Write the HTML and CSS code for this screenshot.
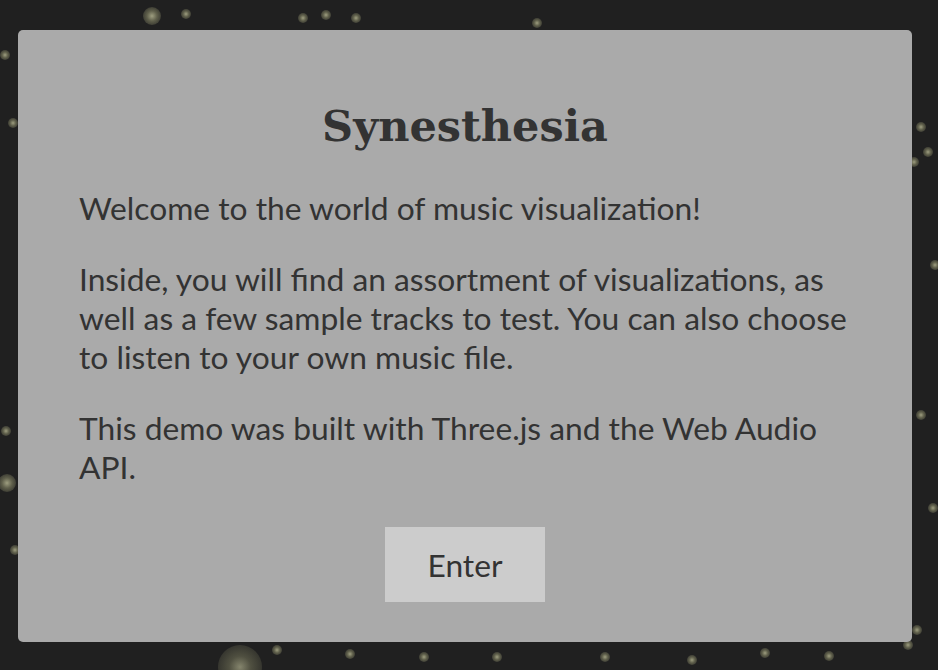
FILE: index.html
```html
<!DOCTYPE html>
<html>
<head>
<meta charset="utf-8">
<link rel="stylesheet" href="styles.css">
</head>
<body>
<div class="sky">
  <span class="dot big" style="left:152px;top:16px"></span>
  <span class="dot" style="left:186px;top:14px"></span>
  <span class="dot" style="left:303px;top:18px"></span>
  <span class="dot" style="left:326px;top:15px"></span>
  <span class="dot" style="left:356px;top:18px"></span>
  <span class="dot" style="left:537px;top:23px"></span>
  <span class="dot" style="left:5px;top:55px"></span>
  <span class="dot" style="left:13px;top:123px"></span>
  <span class="dot" style="left:6px;top:431px"></span>
  <span class="dot big" style="left:7px;top:483px"></span>
  <span class="dot" style="left:15px;top:550px"></span>
  <span class="dot" style="left:921px;top:127px"></span>
  <span class="dot" style="left:928px;top:152px"></span>
  <span class="dot" style="left:914px;top:162px"></span>
  <span class="dot" style="left:935px;top:265px"></span>
  <span class="dot" style="left:921px;top:415px"></span>
  <span class="dot" style="left:933px;top:508px"></span>
  <span class="dot" style="left:917px;top:630px"></span>
  <span class="dot" style="left:908px;top:645px"></span>
  <span class="dot huge" style="left:240px;top:667px"></span>
  <span class="dot" style="left:277px;top:650px"></span>
  <span class="dot" style="left:350px;top:654px"></span>
  <span class="dot" style="left:424px;top:657px"></span>
  <span class="dot" style="left:497px;top:657px"></span>
  <span class="dot" style="left:605px;top:657px"></span>
  <span class="dot" style="left:692px;top:660px"></span>
  <span class="dot" style="left:765px;top:653px"></span>
  <span class="dot" style="left:829px;top:656px"></span>
</div>
<main class="panel">
  <h1 class="title">Synesthesia</h1>
  <p class="text">Welcome to the world of music visualization!</p>
  <p class="text">Inside, you will find an assortment of visualizations, as well as a few sample tracks to test. You can also choose to listen to your own music file.</p>
  <p class="text">This demo was built with Three.js and the Web Audio API.</p>
  <button class="enter">Enter</button>
</main>
</body>
</html>
```
FILE: styles.css
```css
html, body {
  margin: 0;
  padding: 0;
  height: 100%;
  overflow: hidden;
}
body {
  background: #202020;
  position: relative;
  font-family: Lato, "Liberation Sans", sans-serif;
}
.sky {
  position: absolute;
  inset: 0;
}
.dot {
  position: absolute;
  width: 10px;
  height: 10px;
  margin: -5px 0 0 -5px;
  border-radius: 50%;
  background: radial-gradient(circle, rgba(200,200,160,0.75) 0%, rgba(190,190,140,0.4) 40%, rgba(190,190,140,0) 100%);
}
.dot.big {
  width: 18px;
  height: 18px;
  margin: -9px 0 0 -9px;
}
.dot.huge {
  width: 44px;
  height: 44px;
  margin: -22px 0 0 -22px;
  background: radial-gradient(circle, rgba(200,200,160,0.6) 0%, rgba(190,190,140,0.3) 35%, rgba(190,190,140,0) 100%);
}
.panel {
  position: relative;
  box-sizing: border-box;
  margin: 30px 0 0 18px;
  width: 894px;
  height: 612px;
  background: #aaaaaa;
  border-radius: 5px;
  padding: 62px 50px 0 61px;
  display: flex;
  flex-direction: column;
  align-items: stretch;
  color: #333333;
}
.title {
  margin: 2px 0 31px;
  padding-right: 11px;
  font-family: "DejaVu Serif", "Liberation Serif", serif;
  font-weight: bold;
  font-size: 43px;
  line-height: 64px;
  text-align: center;
}
.text {
  margin: 0 0 32px;
  font-size: 31.75px;
  line-height: 39px;
  width: 780px;
}
.enter {
  align-self: center;
  margin-top: 8px;
  margin-right: 11px;
  width: 160px;
  height: 75px;
  border: none;
  background: #cccccc;
  color: #333333;
  font-family: Lato, "Liberation Sans", sans-serif;
  font-size: 31.75px;
  padding: 0;
}
```
